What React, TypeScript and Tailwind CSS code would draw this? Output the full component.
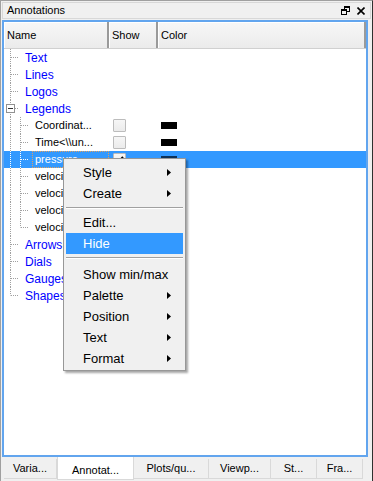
import React from "react";

type Row = {
  label: string;
  level: 0 | 1;
  last?: boolean;
  childLast?: boolean;
  expand?: boolean;
  selected?: boolean;
  checked?: boolean;
  leaf?: boolean;
};

const rows: Row[] = [
  { label: "Text", level: 0 },
  { label: "Lines", level: 0 },
  { label: "Logos", level: 0 },
  { label: "Legends", level: 0, expand: true },
  { label: "Coordinat...", level: 1, leaf: true },
  { label: "Time<\\\\un...", level: 1, leaf: true },
  { label: "pressure...", level: 1, leaf: true, selected: true, checked: true },
  { label: "velocity...", level: 1, leaf: true },
  { label: "velocity...", level: 1, leaf: true },
  { label: "velocity...", level: 1, leaf: true },
  { label: "velocity...", level: 1, leaf: true, childLast: true },
  { label: "Arrows", level: 0 },
  { label: "Dials", level: 0 },
  { label: "Gauges", level: 0 },
  { label: "Shapes", level: 0, last: true },
];

const Connector = ({ row }: { row: Row }) => {
  const line = row.selected ? "#ffffff" : "#a0a0a0";
  if (row.level === 0) {
    return (
      <svg width="21" height="17" className="shrink-0">
        <line x1="6.5" y1="0" x2="6.5" y2={row.last ? 8.5 : 17} stroke={line} strokeDasharray="1 1" />
        <line x1="7" y1="8.5" x2="15" y2="8.5" stroke={line} strokeDasharray="1 1" />
        {row.expand && (
          <g>
            <rect x="2.5" y="4.5" width="8" height="8" fill="#ffffff" stroke="#919191" />
            <line x1="4" y1="8.5" x2="9" y2="8.5" stroke="#303030" />
          </g>
        )}
      </svg>
    );
  }
  return (
    <svg width="31" height="17" className="shrink-0">
      <line x1="6.5" y1="0" x2="6.5" y2="17" stroke={line} strokeDasharray="1 1" />
      <line x1="16.5" y1="0" x2="16.5" y2={row.childLast ? 8.5 : 17} stroke={line} strokeDasharray="1 1" />
      <line x1="17" y1="8.5" x2="24" y2="8.5" stroke={line} strokeDasharray="1 1" />
    </svg>
  );
};

const Checkbox = ({ checked }: { checked?: boolean }) => (
  <div className="w-[13px] h-[13px] border border-[#bcbcbc] bg-gradient-to-b from-[#f6f6f6] to-[#ebebeb] rounded-[1px] flex items-center justify-center">
    {checked && (
      <svg width="9" height="8" viewBox="0 0 9 8">
        <path d="M1 3.5 L3.5 6 L8 1" stroke="#000" strokeWidth="2" fill="none" />
      </svg>
    )}
  </div>
);

const MenuItem = ({ label, sub, hot }: { label: string; sub?: boolean; hot?: boolean }) => (
  <div
    className={`mx-[2px] h-[21px] flex items-center justify-between pl-[17px] pr-[12px] ${
      hot ? "bg-[#3399ff] text-white" : "text-black"
    }`}
  >
    <span>{label}</span>
    {sub && (
      <svg width="4" height="7" viewBox="0 0 4 7">
        <polygon points="0,0 4,3.5 0,7" fill="#000" />
      </svg>
    )}
  </div>
);

const Sep = ({ h }: { h: string }) => (
  <div className={`mx-[2px] ${h} pt-[3px]`}>
    <div className="h-px bg-[#a0a0a0]" />
    <div className="h-px bg-white" />
  </div>
);

const tabs = [
  { label: "Varia...", w: "w-[53px]" },
  { label: "Annotat...", w: "w-[77px]", active: true },
  { label: "Plots/qu...", w: "w-[75px]" },
  { label: "Viewp...", w: "w-[62px]" },
  { label: "St...", w: "w-[46px]" },
  { label: "Fra...", w: "w-[46px]" },
];

export default function App() {
  return (
    <div className="relative w-[373px] h-[481px] bg-[#f0f0f0] border-l border-t border-[#a0a0a0] border-r border-r-[#303030] font-['Liberation_Sans',Arial,sans-serif] flex flex-col overflow-hidden">
      {/* title bar */}
      <div className="h-[19px] shrink-0 px-[1px] pt-[1px]">
        <div className="h-[17px] border border-[#d8d8d8] flex items-center justify-between pl-[4px] pr-[5px]">
          <span className="text-[11px] text-black">Annotations</span>
          <div className="flex items-center gap-[7px]">
            <svg width="9" height="9" viewBox="0 0 9 9">
              <rect x="3.5" y="0.5" width="5" height="5" fill="none" stroke="#000" />
              <rect x="3.5" y="0.5" width="5" height="1.5" fill="#000" />
              <rect x="0.5" y="3.5" width="5" height="5" fill="#f0f0f0" stroke="#000" />
              <rect x="0.5" y="3.5" width="5" height="1.5" fill="#000" />
            </svg>
            <svg width="8" height="8" viewBox="0 0 8 8">
              <path d="M0.5 0.5 L7.5 7.5 M7.5 0.5 L0.5 7.5" stroke="#000" strokeWidth="1.6" />
            </svg>
          </div>
        </div>
      </div>

      {/* tree */}
      <div className="ml-[1px] w-[366px] h-[437px] shrink-0 border-2 border-[#62a5ee] bg-white flex flex-col">
        <div className="h-[27px] shrink-0 flex text-[11px] text-black bg-gradient-to-b from-[#f7f7f7] to-[#ebebeb] border-b border-[#d0d0d0]">
          <div className="w-[105px] border-r-2 border-[#9a9a9a] shadow-[inset_1px_1px_0_#ffffff] flex items-center pl-[3px]">Name</div>
          <div className="w-[49px] border-r-2 border-[#9a9a9a] shadow-[inset_1px_1px_0_#ffffff] flex items-center pl-[3px]">Show</div>
          <div className="flex-1 border-r-2 border-[#9a9a9a] shadow-[inset_1px_1px_0_#ffffff] flex items-center pl-[3px]">Color</div>
        </div>
        <div className="flex flex-col">
          {rows.map((r, i) => (
            <div key={i} className={`h-[17px] flex items-center ${r.selected ? "bg-[#3399ff]" : ""}`}>
              <div className="w-[105px] h-full flex items-center shrink-0">
                <Connector row={r} />
                {r.selected ? (
                  <div className="h-full flex-1 flex items-center border border-dotted border-[#e0a060] -ml-[3px] pl-[2px] text-[11px] text-white whitespace-nowrap overflow-hidden">
                    {r.label}
                  </div>
                ) : (
                  <span
                    className={`whitespace-nowrap ${
                      r.level === 0 ? "text-[12px] text-[#0000ff]" : "text-[11px] text-black"
                    }`}
                  >
                    {r.label}
                  </span>
                )}
              </div>
              {r.leaf && (
                <>
                  <div className="w-[49px] h-full flex items-center pl-[4px] shrink-0">
                    <Checkbox checked={r.checked} />
                  </div>
                  <div className="flex-1 h-full flex items-center pl-[3px]">
                    <div className={`w-[16px] h-[7px] ${r.selected ? "bg-[#0d3157]" : "bg-black"}`} />
                  </div>
                </>
              )}
            </div>
          ))}
        </div>
      </div>

      {/* tabs */}
      <div className="flex items-start pl-[3px] text-[11px] text-black h-[24px]">
        {tabs.map((t) =>
          t.active ? (
            <div key={t.label} className={`${t.w} h-[23px] bg-white border border-[#d9d9d9] border-t-0 flex items-center justify-center pt-[4px]`}>
              {t.label}
            </div>
          ) : (
            <div key={t.label} className={`${t.w} h-[20px] mt-[2px] bg-[#f0f0f0] border border-[#d9d9d9] border-t-0 border-l-0 flex items-center justify-center`}>
              {t.label}
            </div>
          )
        )}
      </div>

      {/* context menu */}
      <div className="absolute left-[62px] top-[157px] w-[123px] bg-[#f0f0f0] border border-[#979797] shadow-[2px_2px_2px_rgba(0,0,0,0.35)] pt-[3px] pb-[1px] text-[13px]">
        <MenuItem label="Style" sub />
        <MenuItem label="Create" sub />
        <Sep h="h-[8px]" />
        <MenuItem label="Edit..." />
        <MenuItem label="Hide" hot />
        <Sep h="h-[10px]" />
        <MenuItem label="Show min/max" />
        <MenuItem label="Palette" sub />
        <MenuItem label="Position" sub />
        <MenuItem label="Text" sub />
        <MenuItem label="Format" sub />
      </div>
    </div>
  );
}
